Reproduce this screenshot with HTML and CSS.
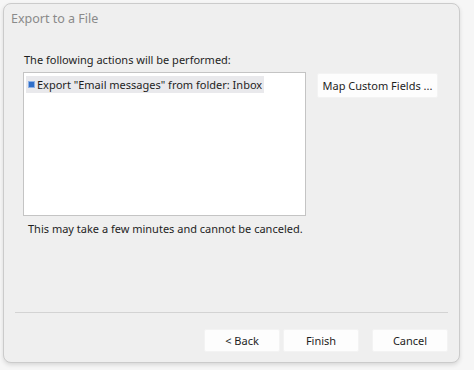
FILE: index.html
```html
<!DOCTYPE html>
<html>
<head>
<meta charset="utf-8">
<link rel="stylesheet" href="styles.css">
</head>
<body>
<div class="window">
  <div class="title">Export to a File</div>
  <div class="content">
    <div class="heading">The following actions will be performed:</div>
    <div class="row">
      <div class="listbox">
        <div class="item"><span class="check"></span><span class="item-text">Export "Email messages" from folder: Inbox</span></div>
      </div>
      <button class="btn map">Map Custom Fields ...</button>
    </div>
    <div class="note">This may take a few minutes and cannot be canceled.</div>
  </div>
  <div class="separator"></div>
  <div class="buttons">
    <button class="btn nav">&lt; Back</button>
    <button class="btn nav">Finish</button>
    <button class="btn nav cancel">Cancel</button>
  </div>
</div>
</body>
</html>
```
FILE: styles.css
```css
html, body {
  margin: 0;
  padding: 0;
}
body {
  background: #f6f6f6;
  font-family: "Noto Sans", "Open Sans", sans-serif;
  font-size: 11px;
  color: #1e1e1e;
  width: 474px;
  height: 370px;
  overflow: hidden;
}
.window {
  margin: 3px 0 0 3px;
  width: 457px;
  height: 360px;
  box-sizing: border-box;
  background: #efefef;
  border: 1px solid #cbcbcb;
  border-radius: 8px;
  box-shadow: 0 2px 4px rgba(0,0,0,0.12);
  display: flex;
  flex-direction: column;
}
.title {
  padding: 4px 0 0 7px;
  height: 26px;
  line-height: 22px;
  font-size: 12.5px;
  color: #8a8a8a;
}
.content {
  padding-left: 19px;
  padding-top: 18px;
}
.heading {
  line-height: 16px;
  height: 16px;
  padding-left: 1px;
  margin-bottom: 4px;
}
.row {
  display: flex;
  align-items: flex-start;
  gap: 11px;
}
.listbox {
  width: 283px;
  height: 144px;
  box-sizing: border-box;
  background: #ffffff;
  border: 1px solid #c4c4c4;
  padding: 3px 0 0 2px;
}
.item {
  display: inline-flex;
  align-items: center;
  height: 17px;
  background: #e9e9ec;
  padding: 0 0 0 2px;
}
.check {
  width: 7px;
  height: 7px;
  background: #2f6fc9;
  border: 1px solid #8fb2e6;
  box-sizing: border-box;
  margin-right: 2px;
}
.item-text {
  padding-right: 2px;
}
.btn {
  font-family: inherit;
  font-size: 11px;
  color: #1e1e1e;
  background: #fdfdfd;
  border: 1px solid #f3f3f3;
  border-radius: 2px;
  padding: 0;
  margin: 0;
  white-space: nowrap;
}
.map {
  width: 121px;
  height: 25px;
  margin-top: 1px;
}
.note {
  margin-top: 5px;
  padding-left: 5px;
  line-height: 16px;
}
.separator {
  margin: auto 11px 0 11px;
  height: 1px;
  background: #d3d3d3;
}
.buttons {
  display: flex;
  justify-content: flex-end;
  gap: 3px;
  padding: 16px 11px 10px 0;
}
.nav {
  width: 76px;
  height: 23px;
}
.cancel {
  margin-left: 10px;
}
```
